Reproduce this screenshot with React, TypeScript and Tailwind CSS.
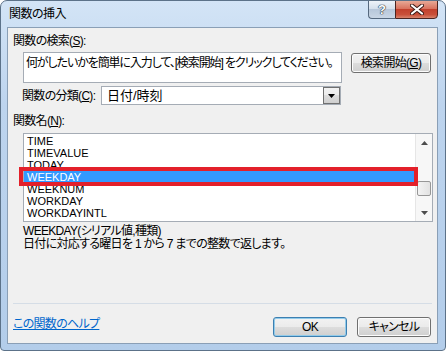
import React from "react";

const items = ["TIME", "TIMEVALUE", "TODAY", "WEEKDAY", "WEEKNUM", "WORKDAY", "WORKDAYINTL"];

const Tri = ({ down }: { down?: boolean }) => (
  <svg width="7" height="4" viewBox="0 0 7 4">
    {down ? <path d="M0 0 H7 L3.5 4 Z" fill="#4d4d4d" /> : <path d="M0 4 H7 L3.5 0 Z" fill="#4d4d4d" />}
  </svg>
);

const VistaButton = ({ label, focused }: { label: string; focused?: boolean }) => (
  <div
    className={`w-[74px] h-[20px] rounded-[3px] border flex items-center justify-center text-[12px] leading-[14px] bg-[linear-gradient(to_bottom,#f2f2f2_0%,#ebebeb_50%,#dddddd_50%,#cfcfcf_100%)] ${
      focused ? "border-[#3c7fb1] shadow-[inset_0_0_0_1px_#92cbea]" : "border-[#707070] shadow-[inset_0_0_0_1px_#fcfcfc]"
    }`}
  >
    {label}
  </div>
);

export default function App() {
  return (
    <div className="w-[446px] h-[351px] flex flex-col rounded-t-[7px] rounded-b-[4px] border border-[#5c7289] bg-[linear-gradient(to_bottom,#d3e4f6_0%,#bdd4ee_30%,#b3cdea_100%)] overflow-hidden text-black whitespace-nowrap font-['Liberation_Sans','Noto_Sans_CJK_JP',sans-serif] [font-feature-settings:'palt']">
      {/* title bar */}
      <div className="h-[26px] flex items-start pl-[8px] pr-[7px]">
        <div className="flex-1 pt-[6px] text-[12px] leading-[14px] tracking-[-0.5px]">関数の挿入</div>
        <div className="flex -mt-[1px]">
          <div className="w-[27px] h-[19px] rounded-bl-[4px] border border-[#55687e] border-r-0 bg-[linear-gradient(to_bottom,#eef3f9_0%,#d5e0ec_45%,#b7c7da_50%,#c9d6e5_100%)] flex items-center justify-center">
            <span className="text-[13px] leading-[13px] font-bold text-white [text-shadow:0_0_1px_#1e2a38,0_0_1px_#1e2a38,0_0_1px_#1e2a38]">?</span>
          </div>
          <div className="w-[43px] h-[19px] rounded-br-[4px] border border-[#4a2420] bg-[linear-gradient(to_bottom,#e8a996_0%,#d9735f_45%,#c2412d_50%,#c9503a_80%,#d9836c_100%)] flex items-center justify-center">
            <svg width="14" height="11" viewBox="0 0 14 11">
              <path d="M2 1.5 L12 9.5 M12 1.5 L2 9.5" stroke="#3a1a16" strokeWidth="4" strokeLinecap="round" />
              <path d="M2 1.5 L12 9.5 M12 1.5 L2 9.5" stroke="#ffffff" strokeWidth="2.2" strokeLinecap="round" />
            </svg>
          </div>
        </div>
      </div>

      {/* client area */}
      <div className="ml-[6px] mr-[7px] mb-[6px] flex-1 border border-[#8a9fb6] bg-[#f0f0f0] flex flex-col text-[12px] leading-[14px] tracking-[-0.7px]">
        <div className="mt-[6px] ml-[5px]">関数の検索(<span className="underline">S</span>):</div>

        <div className="mt-[4px] ml-[15px] flex items-start">
          <div className="w-[319px] h-[31px] bg-white border border-[#a5acb5] px-[2px] pt-[3px] tracking-[-1.1px] overflow-hidden">
            何がしたいかを簡単に入力して、[検索開始] をクリックしてください。
          </div>
          <div className="ml-[9px] mt-[1px] w-[80px] h-[20px] rounded-[3px] border border-[#707070] shadow-[inset_0_0_0_1px_#fcfcfc] bg-[linear-gradient(to_bottom,#f2f2f2_0%,#ebebeb_50%,#dddddd_50%,#cfcfcf_100%)] flex items-center justify-center">
            検索開始(<span className="underline">G</span>)
          </div>
        </div>

        <div className="mt-[3px] ml-[14px] flex items-center">
          <div className="w-[79px]">関数の分類(<span className="underline">C</span>):</div>
          <div className="w-[240px] h-[19px] bg-white border border-[#a5acb5] flex items-center">
            <span className="flex-1 pl-[5px] text-[13px] tracking-[0px]">日付/時刻</span>
            <div className="w-[17px] h-[17px] border border-[#707070] bg-[linear-gradient(to_bottom,#f2f2f2_0%,#ebebeb_50%,#dddddd_50%,#cfcfcf_100%)] flex items-center justify-center">
              <svg width="7" height="4" viewBox="0 0 7 4">
                <path d="M0 0 H7 L3.5 4 Z" fill="#000" />
              </svg>
            </div>
          </div>
        </div>

        <div className="mt-[9px] ml-[5px]">関数名(<span className="underline">N</span>):</div>

        <div className="mt-[5px] ml-[15px] w-[410px] h-[89px] bg-white border border-[#a5acb5] relative flex">
          <div className="flex-1 pt-[1px] text-[11px] leading-[12px] tracking-[0px]">
            {items.map((it) => (
              <div
                key={it}
                className={`h-[12px] pl-[3px] ${it === "WEEKDAY" ? "bg-[#3399ff] text-white" : ""}`}
              >
                {it}
              </div>
            ))}
          </div>
          <div className="w-[17px] bg-[#f7f7f7] border-l border-[#e6e6e6] flex flex-col items-center">
            <div className="h-[17px] flex items-center justify-center">
              <Tri />
            </div>
            <div className="flex-1 w-full flex flex-col">
              <div className="mt-[30px] mx-[1px] h-[15px] rounded-[2px] border border-[#979797] bg-[linear-gradient(to_right,#f3f3f3,#e2e2e2)]"></div>
            </div>
            <div className="h-[17px] flex items-center justify-center">
              <Tri down />
            </div>
          </div>
          <div className="absolute left-[-5px] top-[33px] w-[399px] h-[19px] border-[4px] border-[#e3202a]"></div>
        </div>

        <div className="mt-[3px] ml-[15px] leading-[13px]">
          <div>WEEKDAY(シリアル値,種類)</div>
          <div>日付に対応する曜日を 1 から 7 までの整数で返します。</div>
        </div>

        <div className="flex-1"></div>

        <div className="mx-[5px] h-[1px] bg-[#d5dde6]"></div>
        <div className="mt-[13px] mb-[6px] ml-[5px] mr-[6px] flex items-start">
          <a className="flex-1 text-[#0066cc] underline">この関数のヘルプ</a>
          <VistaButton label="OK" focused />
          <div className="w-[10px]"></div>
          <VistaButton label="キャンセル" />
        </div>
      </div>
    </div>
  );
}
